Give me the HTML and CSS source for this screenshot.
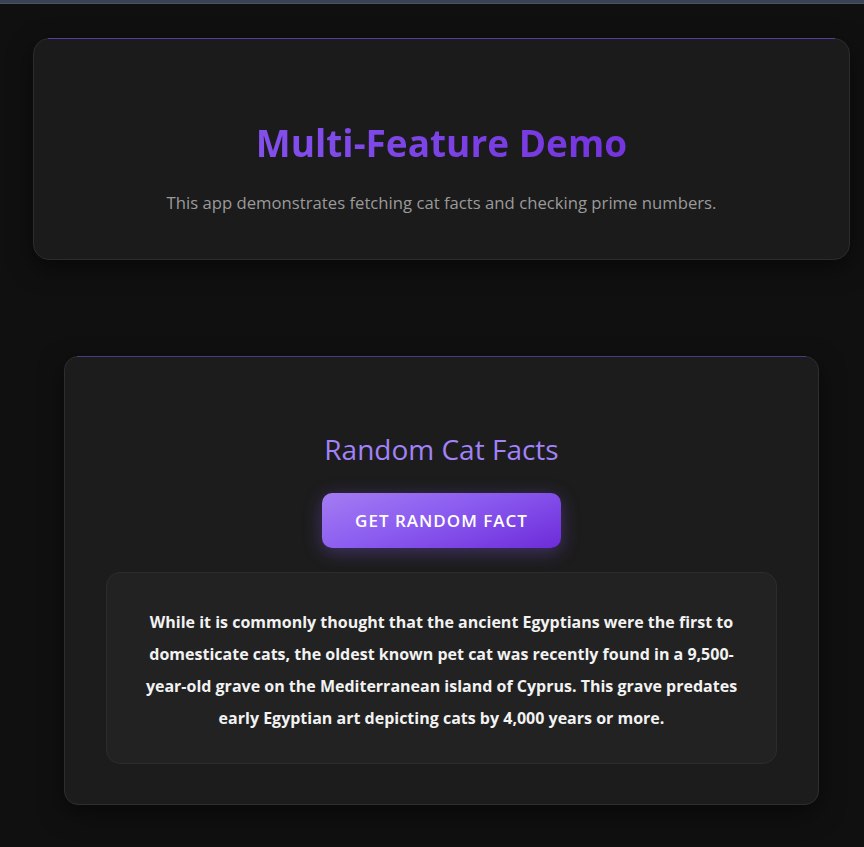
FILE: index.html
```html
<!DOCTYPE html>
<html lang="en">
<head>
<meta charset="utf-8">
<title>Multi-Feature Demo</title>
<link rel="stylesheet" href="styles.css">
</head>
<body>
<div class="topbar"></div>
<main class="page">
  <header class="hero card">
    <h1 class="hero-title">Multi-Feature Demo</h1>
    <p class="hero-sub">This app demonstrates fetching cat facts and checking prime numbers.</p>
  </header>
  <section class="facts card">
    <h2 class="facts-title">Random Cat Facts</h2>
    <button class="btn" type="button">Get Random Fact</button>
    <div class="fact-box">
      <p class="fact-text">While it is commonly thought that the ancient Egyptians were the first to domesticate cats, the oldest known pet cat was recently found in a 9,500-year-old grave on the Mediterranean island of Cyprus. This grave predates early Egyptian art depicting cats by 4,000 years or more.</p>
    </div>
  </section>
</main>
</body>
</html>
```
FILE: styles.css
```css
* { box-sizing: border-box; }
html, body { margin: 0; padding: 0; }
body {
  background: #101010;
  font-family: "Open Sans", "Noto Sans", sans-serif;
  color: #e5e5e5;
  height: 847px;
  overflow: hidden;
}
.topbar {
  height: 4px;
  background: #3b4352;
  border-bottom: 1px solid #4b5363;
}
.page {
  padding: 34px 14px 0 33px;
  display: flex;
  flex-direction: column;
  align-items: stretch;
}
.card {
  position: relative;
  background: #1b1b1b;
  border: 1px solid #2c2c2c;
  border-radius: 16px;
  box-shadow: 0 8px 24px rgba(0,0,0,0.5);
  text-align: center;
}
.card::before {
  content: "";
  position: absolute;
  top: -1px;
  left: 14px;
  right: 14px;
  height: 1px;
  background: #5a3aa6;
}
.hero {
  height: 222px;
  padding-top: 79px;
}
.hero-title {
  margin: 0;
  font-size: 37px;
  font-weight: 700;
  line-height: 50px;
  background: linear-gradient(90deg, #8350ec, #7434df);
  -webkit-background-clip: text;
  background-clip: text;
  color: transparent;
  display: inline-block;
}
.hero-sub {
  margin: 23px 0 0;
  font-size: 16.7px;
  color: #9a9a9a;
  line-height: 24px;
}
.facts {
  margin: 96px 31px 0;
  height: 449px;
  padding: 72px 41px 0;
  border-color: #2e2e2e;
  border-radius: 14px;
  background: #1c1c1c;
  display: flex;
  flex-direction: column;
  align-items: center;
}
.facts::before {
  left: 12px;
  right: 12px;
  background: #4a3a80;
}
.facts-title {
  margin: 0;
  font-size: 28px;
  font-weight: 400;
  line-height: 40px;
  color: #a282f8;
}
.btn {
  margin-top: 24px;
  width: 239px;
  height: 55px;
  border: none;
  border-radius: 10px;
  background: linear-gradient(160deg, #a47cf3 0%, #8b5cf0 45%, #6d2bd9 100%);
  box-shadow: 0 4px 18px rgba(139, 92, 246, 0.35);
  color: #fff;
  font-family: inherit;
  font-size: 17px;
  font-weight: 600;
  letter-spacing: 1px;
  text-transform: uppercase;
  cursor: pointer;
}
.fact-box {
  margin-top: 24px;
  align-self: stretch;
  height: 192px;
  background: #222222;
  border: 1px solid #2c2c2c;
  border-radius: 14px;
  padding: 33px 38px 0;
}
.fact-text {
  margin: 0;
  font-size: 16px;
  font-weight: 700;
  line-height: 32px;
  color: #f2f2f2;
}
```
